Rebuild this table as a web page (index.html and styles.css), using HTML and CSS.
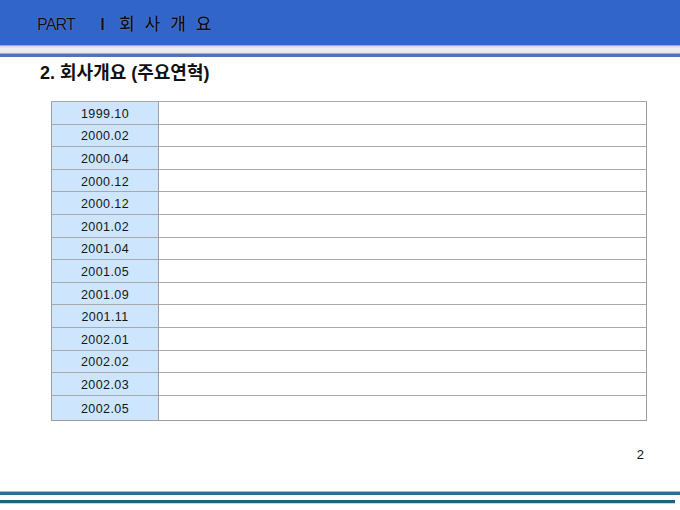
FILE: index.html
```html
<!DOCTYPE html>
<html lang="ko">
<head>
<meta charset="utf-8">
<title>PART Ⅰ 회사개요</title>
<link rel="stylesheet" href="styles.css">
</head>
<body>
<div class="slide">
  <header class="header">
    <h1 class="title"><span class="part">PART</span><span class="roman">Ⅰ</span><span class="ko">회 사 개 요</span></h1>
  </header>
  <div class="band"></div>
  <div class="bandline"></div>
  <h2 class="subtitle">2. 회사개요 (주요연혁)</h2>
  <table class="history">
    <tbody>
      <tr><td class="date">1999.10</td><td class="desc"></td></tr>
      <tr><td class="date">2000.02</td><td class="desc"></td></tr>
      <tr><td class="date">2000.04</td><td class="desc"></td></tr>
      <tr><td class="date">2000.12</td><td class="desc"></td></tr>
      <tr><td class="date">2000.12</td><td class="desc"></td></tr>
      <tr><td class="date">2001.02</td><td class="desc"></td></tr>
      <tr><td class="date">2001.04</td><td class="desc"></td></tr>
      <tr><td class="date">2001.05</td><td class="desc"></td></tr>
      <tr><td class="date">2001.09</td><td class="desc"></td></tr>
      <tr><td class="date">2001.11</td><td class="desc"></td></tr>
      <tr><td class="date">2002.01</td><td class="desc"></td></tr>
      <tr><td class="date">2002.02</td><td class="desc"></td></tr>
      <tr><td class="date">2002.03</td><td class="desc"></td></tr>
      <tr class="last"><td class="date">2002.05</td><td class="desc"></td></tr>
    </tbody>
  </table>
  <div class="pagenum">2</div>
  <footer class="footer">
    <div class="fline fline1"></div>
    <div class="fline fline2"></div>
  </footer>
</div>
</body>
</html>
```

FILE: styles.css
```css
html, body {
  margin: 0;
  padding: 0;
  background: #ffffff;
}

.slide {
  width: 680px;
  height: 510px;
  overflow: hidden;
  position: relative;
  font-family: "Liberation Sans", "Noto Sans CJK KR", sans-serif;
  color: #111111;
}

.header {
  height: 45px;
  background: #3165c9;
  display: flex;
  align-items: center;
  padding-left: 37px;
  box-sizing: border-box;
}

.title {
  margin: 0;
  padding-top: 3px;
  font-size: 17px;
  line-height: 20px;
  font-weight: normal;
  color: #0a0d20;
  text-shadow: 0 0 1px rgba(190, 200, 235, 0.7);
  display: flex;
  align-items: baseline;
}

.part {
  font-size: 16px;
  letter-spacing: -0.8px;
}

.roman {
  margin-left: 20px;
  margin-right: 9px;
  font-size: 15px;
  font-weight: bold;
}

.ko {
  letter-spacing: 2.6px;
  font-family: "Noto Sans CJK KR", sans-serif;
  font-size: 17px;
  font-weight: 500;
}

.band {
  height: 9px;
  box-sizing: border-box;
  border-top: 1px solid #9ea6c4;
  border-bottom: 1px solid #a8adc4;
  background: linear-gradient(#d4d6e0, #f0f0f4 40%, #e6e7ee);
}

.bandline {
  height: 3px;
  background: #4f72bf;
}

.subtitle {
  margin: 5px 0 0 40px;
  font-size: 18px;
  line-height: 22px;
  font-weight: bold;
  color: #111111;
}

.history {
  margin: 17px 0 0 51px;
  width: 596px;
  border-collapse: collapse;
  border: 1px solid #9c9c9c;
  font-size: 12.5px;
}

.history td {
  border-top: 1px solid #a8a8a8;
  height: 22.6px;
  padding: 0;
  box-sizing: border-box;
}

.history tr.last td {
  height: 25px;
}

.history .date {
  width: 107px;
  background: #cde5fd;
  border-right: 1px solid #a0a0a0;
  text-align: center;
  letter-spacing: 0.4px;
  color: #161616;
  padding-top: 2px;
}

.pagenum {
  margin: 26px 0 0 0;
  width: 644px;
  text-align: right;
  font-size: 13px;
  line-height: 16px;
  color: #111111;
}

.footer {
  margin-top: 28px;
}

.fline {
  height: 3px;
}

.fline1 {
  width: 680px;
  background: #2d6d8f;
  border-top: 1px solid #8fc1da;
}

.fline2 {
  width: 675px;
  margin-top: 5px;
  background: #235f7e;
  border-bottom: 1px solid #b9dcec;
}
```
